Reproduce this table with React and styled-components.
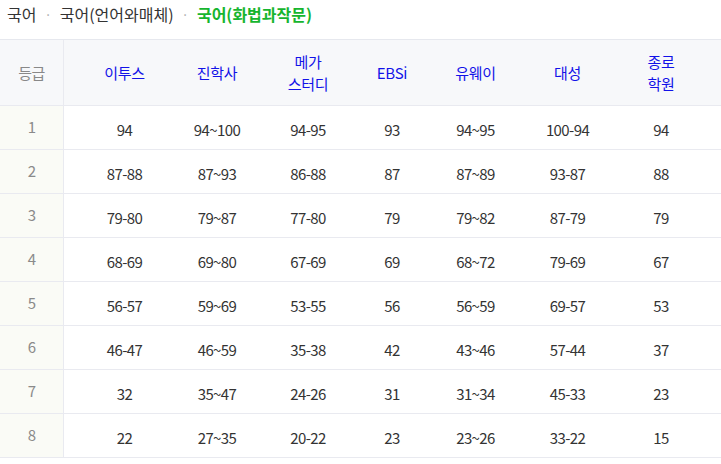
import React from 'react';
import styled, { createGlobalStyle } from 'styled-components';

const GlobalStyle = createGlobalStyle`
  body {
    margin: 0;
    background: #fff;
    font-family: "Noto Sans CJK KR", "Noto Sans", sans-serif;
  }
`;

const columns = ['이투스', '진학사', '메가\n스터디', 'EBSi', '유웨이', '대성', '종로\n학원'];

const rows = [
  ['94', '94~100', '94-95', '93', '94~95', '100-94', '94'],
  ['87-88', '87~93', '86-88', '87', '87~89', '93-87', '88'],
  ['79-80', '79~87', '77-80', '79', '79~82', '87-79', '79'],
  ['68-69', '69~80', '67-69', '69', '68~72', '79-69', '67'],
  ['56-57', '59~69', '53-55', '56', '56~59', '69-57', '53'],
  ['46-47', '46~59', '35-38', '42', '43~46', '57-44', '37'],
  ['32', '35~47', '24-26', '31', '31~34', '45-33', '23'],
  ['22', '27~35', '20-22', '23', '23~26', '33-22', '15'],
];

const crumbs = [
  { label: '국어' },
  { label: '국어(언어와매체)' },
  { label: '국어(화법과작문)', active: true },
];

export default function App() {
  return (
    <Page>
      <GlobalStyle />
      <Breadcrumb>
        {crumbs.map((c, i) => (
          <React.Fragment key={c.label}>
            {i > 0 && <Dot>·</Dot>}
            <Crumb $active={c.active}>{c.label}</Crumb>
          </React.Fragment>
        ))}
      </Breadcrumb>
      <Table>
        <HeadRow>
          <GradeHead>등급</GradeHead>
          {columns.map((name) => (
            <HeadCell key={name}>{name}</HeadCell>
          ))}
        </HeadRow>
        {rows.map((row, i) => (
          <Row key={i}>
            <GradeCell>{i + 1}</GradeCell>
            {row.map((v, j) => (
              <Cell key={j}>{v}</Cell>
            ))}
          </Row>
        ))}
      </Table>
    </Page>
  );
}

const Page = styled.div`
  width: 721px;
`;

const Breadcrumb = styled.div`
  display: flex;
  align-items: center;
  height: 28px;
  padding-left: 7px;
  font-size: 16px;
`;

const Crumb = styled.span`
  color: ${(p) => (p.$active ? '#16b52e' : '#333')};
  font-weight: ${(p) => (p.$active ? 700 : 400)};
`;

const Dot = styled.span`
  color: #aaa;
  margin: 0 8px;
  font-size: 13px;
`;

const Table = styled.div`
  margin-top: 11px;
  border-top: 1px solid #e6e8ee;
`;

const Row = styled.div`
  display: grid;
  grid-template-columns: 64px 121px 64px 118px 50px 117px 67px 120px;
  height: 44px;
  border-bottom: 1px solid #e9eaf0;
  box-sizing: border-box;
`;

const HeadRow = styled(Row)`
  height: 66px;
  background: #f7f8fa;
`;

const Cell = styled.div`
  display: flex;
  align-items: center;
  justify-content: center;
  padding-top: 3px;
  font-size: 15px;
  color: #333;
  letter-spacing: -0.6px;
  white-space: nowrap;
`;

const HeadCell = styled(Cell)`
  padding-top: 0;
  color: #1212e8;
  white-space: pre-line;
  text-align: center;
  line-height: 22px;
  letter-spacing: -0.3px;
`;

const GradeHead = styled(Cell)`
  padding-top: 0;
  color: #888;
  border-right: 1px solid #e9eaf0;
`;

const GradeCell = styled(Cell)`
  padding-top: 0;
  padding-bottom: 3px;
  color: #8a8a8a;
  background: #fafbf6;
  border-right: 1px solid #e9eaf0;
`;
